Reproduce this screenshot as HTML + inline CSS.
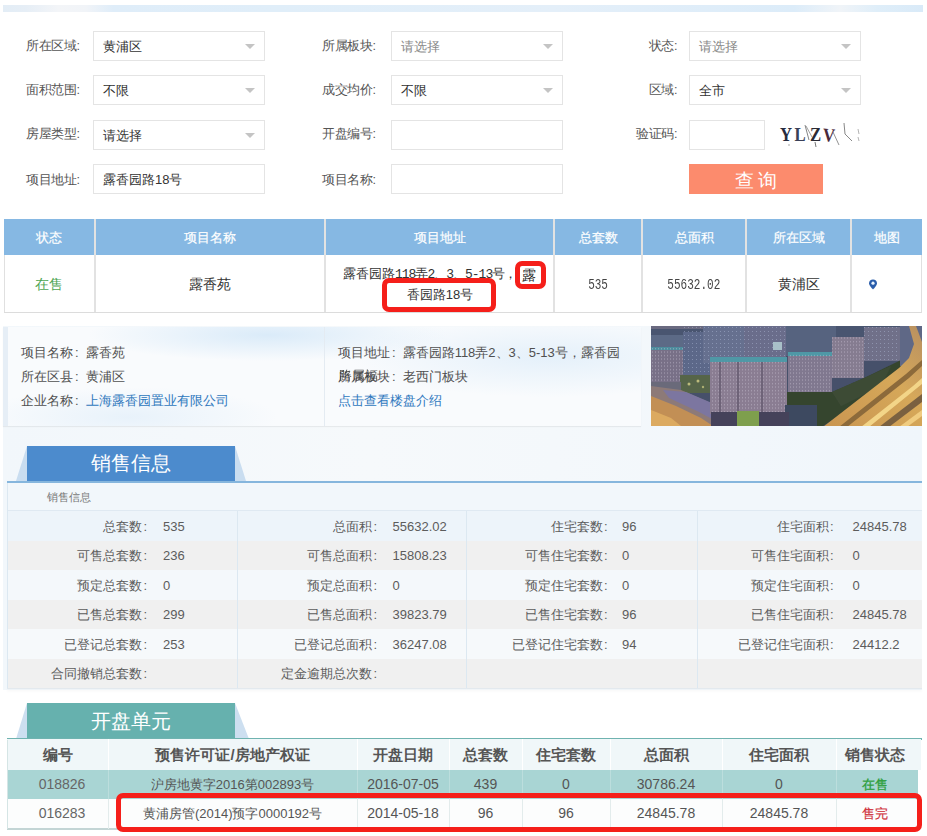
<!DOCTYPE html>
<html><head><meta charset="utf-8">
<style>
*{margin:0;padding:0;box-sizing:border-box}
html,body{width:927px;height:836px;overflow:hidden;background:#fff}
body{text-spacing-trim:space-all;position:relative;font-family:"Liberation Sans",sans-serif;font-size:12px;color:#555}
.a{position:absolute}
.topbar{left:3px;top:5px;width:920px;height:7px;background:linear-gradient(90deg,#e3edf6 0%,#e6eef6 2.5%,#f3f5f8 6%,#f1f4f8 9%,#dfedf9 12%,#e0eef9 30%,#e4eff9 60%,#dcecf9 86%,#f0f4f8 91%,#dfeef9 95%,#d9eaf8 100%)}
.lbl{position:absolute;font-size:12.5px;color:#555;line-height:14px;letter-spacing:-0.4px;white-space:nowrap}
.lbl.r{text-align:right}
.box{position:absolute;border:1px solid #e4e4e4;background:#fff;height:30px}
.box .t{position:absolute;left:9px;top:7px;font-size:13px;line-height:15px;color:#333;white-space:nowrap}
.box .t.ph{color:#888}
.box .arr{position:absolute;right:9px;top:12px;width:0;height:0;border-left:5.5px solid transparent;border-right:5.5px solid transparent;border-top:5px solid #c4c4c4}
.btn{left:689px;top:164px;width:134px;height:30px;background:#fc8b6d;color:#fff;font-size:19px;line-height:33px;text-align:center;letter-spacing:4px;text-indent:3px}

.tbl{position:absolute;left:4px;top:219px;width:918px;height:94px}
.th{position:absolute;top:0;height:36px;background:#86b8e3;color:#fff;font-size:13px;line-height:38px;text-align:center;-webkit-text-stroke:0.2px #fff}
.tdc{position:absolute;top:36px;height:58px;border-bottom:1px solid #dcdcdc;text-align:center;font-size:13.5px;color:#333;line-height:59px}
.ss{display:inline-block;font-family:'Liberation Mono',monospace;font-size:14.5px;transform:scaleX(0.76);color:#444}
.vl{position:absolute;width:2px;background:#e2e2e2}
.rbox{position:absolute;border:5px solid #f51f1a;border-radius:7px;background:#fff}

.bg{left:3px;top:326px;width:919px;height:364px;background:linear-gradient(90deg,#f2f7fb 0%,#f6f9fb 40%,#f0f6fb 100%)}
.panel{left:3px;top:327px;width:638px;height:99px;background:radial-gradient(ellipse 180px 26px at 260px 8px,rgba(205,228,247,0.7),rgba(205,228,247,0) 100%),radial-gradient(ellipse 200px 40px at 540px 30px,rgba(215,233,248,0.6),rgba(215,233,248,0) 100%),radial-gradient(ellipse 150px 30px at 120px 90px,rgba(215,233,248,0.5),rgba(215,233,248,0) 100%),#f9fbfd;border-left:5px solid #e6eef6;box-shadow:0 1px 1px rgba(0,0,0,0.06)}
.pl{position:absolute;font-size:13px;line-height:14px;color:#505050;white-space:nowrap}
.pc{margin:0 7px 0 2px}
.lnk{color:#2f78bd}
.tab{position:absolute;height:35px;color:#fff;font-size:20px;line-height:35px;text-align:center}
.stbl{left:7px;top:481px;width:915px;height:208px;border-left:1px solid #dce7f0}
.srow{position:absolute;left:0;width:915px;height:29.5px}
.sl{position:absolute;text-align:right;font-size:13px;color:#5c5c5c;line-height:16px;white-space:nowrap}
.co{margin-left:1px}
.sv{position:absolute;font-size:13px;color:#5c5c5c;line-height:16px;white-space:nowrap}
.kh{position:absolute;top:739px;height:31px;text-align:center;font-size:15px;font-weight:bold;color:#555;line-height:31px}
.kc{position:absolute;height:29px;text-align:center;font-size:14px;color:#555;line-height:29px;white-space:nowrap}
</style></head><body>
<div class="a topbar"></div>

<!-- form row 1 -->
<div class="lbl" style="left:26px;top:39px">所在区域:</div>
<div class="box" style="left:93px;top:31px;width:172px"><span class="t">黄浦区</span><span class="arr"></span></div>
<div class="lbl" style="left:322px;top:39px">所属板块:</div>
<div class="box" style="left:391px;top:31px;width:172px"><span class="t ph">请选择</span><span class="arr"></span></div>
<div class="lbl r" style="left:600px;width:77px;top:39px">状态:</div>
<div class="box" style="left:689px;top:31px;width:172px"><span class="t ph">请选择</span><span class="arr"></span></div>

<!-- row 2 -->
<div class="lbl" style="left:26px;top:83px">面积范围:</div>
<div class="box" style="left:93px;top:75px;width:172px"><span class="t">不限</span><span class="arr"></span></div>
<div class="lbl" style="left:322px;top:83px">成交均价:</div>
<div class="box" style="left:391px;top:75px;width:172px"><span class="t">不限</span><span class="arr"></span></div>
<div class="lbl r" style="left:600px;width:77px;top:83px">区域:</div>
<div class="box" style="left:689px;top:75px;width:172px"><span class="t">全市</span><span class="arr"></span></div>

<!-- row 3 -->
<div class="lbl" style="left:26px;top:127px">房屋类型:</div>
<div class="box" style="left:93px;top:120px;width:172px"><span class="t">请选择</span><span class="arr"></span></div>
<div class="lbl" style="left:322px;top:127px">开盘编号:</div>
<div class="box" style="left:391px;top:120px;width:172px"></div>
<div class="lbl r" style="left:600px;width:77px;top:127px">验证码:</div>
<div class="box" style="left:689px;top:120px;width:76px"></div>

<!-- row 4 -->
<div class="lbl" style="left:26px;top:173px">项目地址:</div>
<div class="box" style="left:93px;top:164px;width:172px"><span class="t">露香园路18号</span></div>
<div class="lbl" style="left:322px;top:173px">项目名称:</div>
<div class="box" style="left:391px;top:164px;width:172px"></div>

<svg class="a" style="left:770px;top:110px" width="100" height="45" viewBox="0 0 100 45">
  <g font-family="Liberation Serif" font-weight="bold" font-size="19">
    <text transform="translate(10,30.8) scale(0.88,1)" fill="#262b3e">Y</text>
    <text transform="translate(24.5,30.8) scale(0.88,1)" fill="#3a3f58">L</text>
    <text transform="translate(40,31.3) scale(0.88,1)" fill="#2a2a34">Z</text>
    <text transform="translate(52.5,31) scale(0.88,1) rotate(4)" fill="#4a2a3c">V</text>
  </g>
  <path d="M35 15 L39 30" stroke="#666" stroke-width="0.8" fill="none"/>
  <path d="M36 16 L42 27" stroke="#777" stroke-width="0.7" fill="none"/>
  <path d="M45 32 L46 37" stroke="#555" stroke-width="0.8" fill="none"/>
  <path d="M63 22 L69 35" stroke="#777" stroke-width="0.8" fill="none"/>
  <path d="M74 13 L75 24 L82 31" stroke="#888" stroke-width="1" fill="none"/>
  <path d="M88 19 L89 24 M88 27 L89 31" stroke="#aaa" stroke-width="0.9" fill="none"/>
  <circle cx="19" cy="35" r="0.7" fill="#888"/>
</svg>
<div class="a btn">查询</div>


<!-- result table -->
<div class="tbl">
  <div class="th" style="left:0;width:90px">状态</div>
  <div class="th" style="left:92px;width:228px">项目名称</div>
  <div class="th" style="left:322px;width:227px">项目地址</div>
  <div class="th" style="left:551px;width:86px">总套数</div>
  <div class="th" style="left:639px;width:102px">总面积</div>
  <div class="th" style="left:743px;width:103px">所在区域</div>
  <div class="th" style="left:848px;width:70px">地图</div>
  <div class="tdc" style="left:0;width:918px;border-left:1px solid #e0e0e0;border-right:1px solid #e0e0e0"></div>
  <div class="tdc" style="left:0;width:90px;color:#4fa553">在售</div>
  <div class="tdc" style="left:92px;width:228px">露香苑</div>
  <div class="tdc" style="left:551px;width:86px"><span class="ss">535</span></div>
  <div class="tdc" style="left:639px;width:102px"><span class="ss">55632.02</span></div>
  <div class="tdc" style="left:743px;width:103px;font-size:14px">黄浦区</div>
  <div class="vl" style="left:90px;top:0;height:93px"></div>
  <div class="vl" style="left:320px;top:0;height:93px"></div>
  <div class="vl" style="left:549px;top:0;height:93px"></div>
  <div class="vl" style="left:637px;top:0;height:93px"></div>
  <div class="vl" style="left:741px;top:0;height:93px"></div>
  <div class="vl" style="left:846px;top:0;height:93px"></div>
</div>
<div class="a" style="left:343px;top:266px;font-size:13px;line-height:16px;color:#333;white-space:nowrap">露香园路<span style="font-family:'Liberation Mono',monospace;font-size:13px;letter-spacing:-1px">118弄2、3、5-13号，</span></div>
<div class="rbox" style="left:515px;top:261px;width:31px;height:28px;font-size:14px;color:#222;line-height:18px;text-align:left;padding-left:2px">露</div>
<div class="rbox" style="left:382px;top:278px;width:114px;height:34px;font-size:13px;color:#333;line-height:23px;text-align:center;padding-left:2px">香园路18号</div>
<svg class="a" style="left:868px;top:279px" width="10" height="11" viewBox="0 0 10 11"><path d="M5 0.5C2.6 0.5 1 2.2 1 4.3C1 6.8 5 10.5 5 10.5C5 10.5 9 6.8 9 4.3C9 2.2 7.4 0.5 5 0.5Z" fill="#2a5dab"/><circle cx="5" cy="4.2" r="1.6" fill="#e8f4ff"/></svg>

<div class="a bg"></div>
<div class="a panel">
  <div class="pl" style="left:13px;top:19px">项目名称<span class="pc">:</span>露香苑</div>
  <div class="pl" style="left:13px;top:43px">所在区县<span class="pc">:</span>黄浦区</div>
  <div class="pl" style="left:13px;top:67px">企业名称<span class="pc">:</span><span class="lnk">上海露香园置业有限公司</span></div>
  <div class="a" style="left:316px;top:0;width:1px;height:99px;background:#e4ebf2"></div>
  <div class="pl" style="left:330px;top:19px">项目地址<span class="pc">:</span>露香园路118弄2、3、5-13号，露香园</div>
  <div class="pl" style="left:330px;top:43px"><span style="position:relative">所属板<span style="position:absolute;left:0.6px;top:0.3px;color:#333;opacity:0.8">路属福</span></span>块<span class="pc">:</span>老西门板块</div>
  <div class="pl" style="left:330px;top:67px"><span class="lnk">点击查看楼盘介绍</span></div>
</div>
<svg class="a" style="left:651px;top:326px" width="271" height="100" viewBox="0 0 271 100">
  <defs>
    <filter id="bl" x="-5%" y="-5%" width="110%" height="110%"><feGaussianBlur stdDeviation="0.7"/></filter>
    <linearGradient id="road" x1="0" y1="1" x2="1" y2="0"><stop offset="0" stop-color="#c99550"/><stop offset="0.6" stop-color="#d6a85a"/><stop offset="1" stop-color="#b89060"/></linearGradient>
    <linearGradient id="roadL" x1="0" y1="0" x2="1" y2="1"><stop offset="0" stop-color="#b88450"/><stop offset="1" stop-color="#d7a258"/></linearGradient>
    <pattern id="win" width="3" height="3.5" patternUnits="userSpaceOnUse"><rect x="1" y="1" width="1" height="1.2" fill="#d8d0e0" opacity="0.45"/></pattern>
    <pattern id="win2" width="4" height="4" patternUnits="userSpaceOnUse"><rect x="1" y="1" width="1" height="1" fill="#c8d4f0" opacity="0.35"/></pattern>
  </defs>
  <rect width="271" height="100" fill="#46506a"/>
  <g filter="url(#bl)">
  <rect x="0" y="0" width="271" height="14" fill="#4a5570"/>
  <rect x="0" y="0" width="60" height="3" fill="#6a6a80"/>
  <rect x="0" y="9" width="55" height="14" fill="#5b6a86"/>
  <rect x="32" y="6" width="28" height="46" fill="#5c6889"/>
  <rect x="52" y="0" width="41" height="37" fill="#66708f"/>
  <rect x="93" y="0" width="42" height="38" fill="#6a6d8b"/>
  <rect x="32" y="0" width="103" height="50" fill="url(#win2)"/>
  <rect x="122" y="16" width="9" height="8" fill="#a8c0c8"/>
  <rect x="135" y="0" width="50" height="30" fill="#57637f"/>
  <rect x="0" y="22" width="32" height="35" fill="#787087"/>
  <rect x="0" y="21" width="32" height="3" fill="#4e8d9d"/>
  <rect x="0" y="22" width="32" height="35" fill="url(#win)"/>
  <rect x="29" y="49" width="31" height="18" fill="#56654a"/>
  <circle cx="38" cy="58" r="1.5" fill="#e8e090" opacity="0.7"/><circle cx="47" cy="55" r="1.5" fill="#e8e090" opacity="0.7"/><circle cx="52" cy="61" r="1.2" fill="#e8e090" opacity="0.6"/>
  <rect x="0" y="56" width="30" height="8" fill="#6a6a7a"/>
  <polygon points="0,60 30,64 62,78 75,92 90,100 0,100" fill="#8d7a78"/>
  <polygon points="12,64 35,66 68,80 82,97 74,100 48,86 18,72" fill="#7c76a0"/>
  <polygon points="0,70 25,80 50,92 62,100 0,100" fill="#c28f55"/><polygon points="0,84 20,92 30,100 0,100" fill="#dcaa60"/>
  <rect x="59" y="34" width="77" height="54" fill="#8a7d92"/>
  <rect x="59" y="31" width="77" height="5" fill="#4f98a6"/>
  <rect x="68" y="36" width="2" height="50" fill="#6e6378"/>
  <rect x="86" y="36" width="2" height="50" fill="#6e6378"/>
  <rect x="110" y="36" width="2" height="50" fill="#6e6378"/>
  <rect x="59" y="34" width="77" height="54" fill="url(#win)"/>
  <rect x="137" y="28" width="44" height="38" fill="#80788f"/>
  <rect x="137" y="26" width="44" height="4" fill="#4f98a6"/>
  <rect x="137" y="28" width="44" height="38" fill="url(#win)"/>
  <rect x="181" y="11" width="32" height="41" fill="#857b90"/>
  <rect x="181" y="11" width="32" height="41" fill="url(#win)"/>
  <rect x="213" y="1" width="36" height="34" fill="#6f7089"/>
  <rect x="213" y="1" width="36" height="34" fill="url(#win2)"/>
  <polygon points="136,66 181,66 213,52 250,34 262,36 250,50 172,100 136,100" fill="#36442f"/>
  <polygon points="181,66 213,52 240,40 230,60 190,80" fill="#3d4c36"/>
  <rect x="134" y="79" width="32" height="21" fill="#3e4860"/>
  <rect x="60" y="86" width="78" height="14" fill="#45425a"/>
  <rect x="86" y="85" width="22" height="15" fill="#7e9f4e"/>
  <rect x="249" y="0" width="22" height="40" fill="#5f6886"/><polygon points="172,101 248,42 258,32 263,18 258,0 265,0 271,16 271,101" fill="url(#road)"/>
  <polygon points="188,101 255,48 271,34 271,40 258,52 196,101" fill="#8c6a3a"/>
  <polygon points="210,101 262,60 271,52 271,58 218,101" fill="#f3d588"/>
  <polygon points="228,101 271,68 271,76 238,101" fill="#7a6040"/>
  <polygon points="248,101 271,84 271,90 256,101" fill="#f0cc80"/>

  </g>
</svg>

<!-- sales tab -->
<svg class="a" style="left:0;top:440px" width="927" height="50">
  <polygon points="16,41 27,6 27,41" fill="#c9ddf0"/>
  <polygon points="235,6 246,41 235,41" fill="#c9ddf0"/>
  <rect x="7" y="41" width="915" height="2" fill="#86b6dd"/>
</svg>
<div class="a tab" style="left:27px;top:446px;width:208px;background:#4c8bcd">销售信息</div>
<div class="a" style="left:7px;top:483px;width:915px;height:28px;background:#f2f7fb;border-bottom:1px solid #dfe9f2"></div>
<div class="a" style="left:47px;top:491px;font-size:11px;color:#777;line-height:13px">销售信息</div>
<div class="a" style="left:7px;top:511.0px;width:915px;height:29.5px;background:#edf4fa"></div>
<div class="sl" style="left:7px;width:140px;top:518.5px">总套数<span class="co">:</span></div><div class="sv" style="left:163px;top:518.5px">535</div><div class="sl" style="left:237px;width:140px;top:518.5px">总面积<span class="co">:</span></div><div class="sv" style="left:392.5px;top:518.5px">55632.02</div><div class="sl" style="left:466px;width:141.5px;top:518.5px">住宅套数<span class="co">:</span></div><div class="sv" style="left:622px;top:518.5px">96</div><div class="sl" style="left:697px;width:136.5px;top:518.5px">住宅面积<span class="co">:</span></div><div class="sv" style="left:852.5px;top:518.5px">24845.78</div>
<div class="a" style="left:7px;top:540.5px;width:915px;height:29.5px;background:#f0f0f0"></div>
<div class="sl" style="left:7px;width:140px;top:548.0px">可售总套数<span class="co">:</span></div><div class="sv" style="left:163px;top:548.0px">236</div><div class="sl" style="left:237px;width:140px;top:548.0px">可售总面积<span class="co">:</span></div><div class="sv" style="left:392.5px;top:548.0px">15808.23</div><div class="sl" style="left:466px;width:141.5px;top:548.0px">可售住宅套数<span class="co">:</span></div><div class="sv" style="left:622px;top:548.0px">0</div><div class="sl" style="left:697px;width:136.5px;top:548.0px">可售住宅面积<span class="co">:</span></div><div class="sv" style="left:852.5px;top:548.0px">0</div>
<div class="a" style="left:7px;top:570.0px;width:915px;height:29.5px;background:#f4f8fb"></div>
<div class="sl" style="left:7px;width:140px;top:577.5px">预定总套数<span class="co">:</span></div><div class="sv" style="left:163px;top:577.5px">0</div><div class="sl" style="left:237px;width:140px;top:577.5px">预定总面积<span class="co">:</span></div><div class="sv" style="left:392.5px;top:577.5px">0</div><div class="sl" style="left:466px;width:141.5px;top:577.5px">预定住宅套数<span class="co">:</span></div><div class="sv" style="left:622px;top:577.5px">0</div><div class="sl" style="left:697px;width:136.5px;top:577.5px">预定住宅面积<span class="co">:</span></div><div class="sv" style="left:852.5px;top:577.5px">0</div>
<div class="a" style="left:7px;top:599.5px;width:915px;height:29.5px;background:#f0f0f0"></div>
<div class="sl" style="left:7px;width:140px;top:607.0px">已售总套数<span class="co">:</span></div><div class="sv" style="left:163px;top:607.0px">299</div><div class="sl" style="left:237px;width:140px;top:607.0px">已售总面积<span class="co">:</span></div><div class="sv" style="left:392.5px;top:607.0px">39823.79</div><div class="sl" style="left:466px;width:141.5px;top:607.0px">已售住宅套数<span class="co">:</span></div><div class="sv" style="left:622px;top:607.0px">96</div><div class="sl" style="left:697px;width:136.5px;top:607.0px">已售住宅面积<span class="co">:</span></div><div class="sv" style="left:852.5px;top:607.0px">24845.78</div>
<div class="a" style="left:7px;top:629.0px;width:915px;height:29.5px;background:#f6f9fb"></div>
<div class="sl" style="left:7px;width:140px;top:636.5px">已登记总套数<span class="co">:</span></div><div class="sv" style="left:163px;top:636.5px">253</div><div class="sl" style="left:237px;width:140px;top:636.5px">已登记总面积<span class="co">:</span></div><div class="sv" style="left:392.5px;top:636.5px">36247.08</div><div class="sl" style="left:466px;width:141.5px;top:636.5px">已登记住宅套数<span class="co">:</span></div><div class="sv" style="left:622px;top:636.5px">94</div><div class="sl" style="left:697px;width:136.5px;top:636.5px">已登记住宅面积<span class="co">:</span></div><div class="sv" style="left:852.5px;top:636.5px">24412.2</div>
<div class="a" style="left:7px;top:658.5px;width:915px;height:29.5px;background:#f0f0f0"></div>
<div class="sl" style="left:7px;width:140px;top:666.0px">合同撤销总套数<span class="co">:</span></div><div class="sl" style="left:237px;width:140px;top:666.0px">定金逾期总次数<span class="co">:</span></div>

<div class="a" style="left:237px;top:511px;width:1px;height:177px;background:#dce8f1"></div>
<div class="a" style="left:466px;top:511px;width:1px;height:177px;background:#dce8f1"></div>
<div class="a" style="left:697px;top:511px;width:1px;height:177px;background:#dce8f1"></div>
<div class="a" style="left:7px;top:483px;width:1px;height:206px;background:#dce8f1"></div>
<div class="a" style="left:7px;top:688px;width:915px;height:1px;background:#e3e9ee;box-shadow:0 2px 3px rgba(0,0,0,0.07)"></div>

<!-- 开盘单元 -->
<svg class="a" style="left:0;top:700px" width="927" height="45">
  <polygon points="16,39 27,3 27,39" fill="#cddff0"/>
  <polygon points="235,3 249,39 235,39" fill="#cddff0"/>
  <rect x="7" y="38" width="915" height="2" fill="#6fb3b0"/>
</svg>
<div class="a tab" style="left:27px;top:703px;width:208px;height:35px;line-height:37px;background:#66b1ae">开盘单元</div>
<div class="a" style="left:7px;top:739px;width:914px;height:31px;background:#f0f7f9"></div>
<div class="a" style="left:7px;top:770px;width:911px;height:29px;background:#a9d5d4"></div>
<div class="a" style="left:7px;top:799px;width:911px;height:31px;background:#fcfdfd;border-bottom:2px solid #c3d5d5"></div><div class="a" style="left:7px;top:740px;width:1px;height:89px;background:#d5e5e5"></div>
<div class="a" style="left:108px;top:739px;width:1px;height:31px;background:#fff"></div><div class="a" style="left:108px;top:770px;width:1px;height:29px;background:#bcdedd"></div><div class="a" style="left:108px;top:799px;width:1px;height:30px;background:#e3ecec"></div><div class="a" style="left:357px;top:739px;width:1px;height:31px;background:#fff"></div><div class="a" style="left:357px;top:770px;width:1px;height:29px;background:#bcdedd"></div><div class="a" style="left:357px;top:799px;width:1px;height:30px;background:#e3ecec"></div><div class="a" style="left:449px;top:739px;width:1px;height:31px;background:#fff"></div><div class="a" style="left:449px;top:770px;width:1px;height:29px;background:#bcdedd"></div><div class="a" style="left:449px;top:799px;width:1px;height:30px;background:#e3ecec"></div><div class="a" style="left:522px;top:739px;width:1px;height:31px;background:#fff"></div><div class="a" style="left:522px;top:770px;width:1px;height:29px;background:#bcdedd"></div><div class="a" style="left:522px;top:799px;width:1px;height:30px;background:#e3ecec"></div><div class="a" style="left:610px;top:739px;width:1px;height:31px;background:#fff"></div><div class="a" style="left:610px;top:770px;width:1px;height:29px;background:#bcdedd"></div><div class="a" style="left:610px;top:799px;width:1px;height:30px;background:#e3ecec"></div><div class="a" style="left:722px;top:739px;width:1px;height:31px;background:#fff"></div><div class="a" style="left:722px;top:770px;width:1px;height:29px;background:#bcdedd"></div><div class="a" style="left:722px;top:799px;width:1px;height:30px;background:#e3ecec"></div><div class="a" style="left:836px;top:739px;width:1px;height:31px;background:#fff"></div><div class="a" style="left:836px;top:770px;width:1px;height:29px;background:#bcdedd"></div><div class="a" style="left:836px;top:799px;width:1px;height:30px;background:#e3ecec"></div>
<div class="kh" style="left:7px;width:101px">编号</div>
<div class="kh" style="left:108px;width:249px">预售许可证/房地产权证</div>
<div class="kh" style="left:357px;width:92px">开盘日期</div>
<div class="kh" style="left:449px;width:73px">总套数</div>
<div class="kh" style="left:522px;width:88px">住宅套数</div>
<div class="kh" style="left:610px;width:112px">总面积</div>
<div class="kh" style="left:722px;width:114px">住宅面积</div>
<div class="kh" style="left:836px;width:78px">销售状态</div>
<div class="kc" style="left:16px;top:770px;width:92px;color:#666">018826</div>
<div class="kc" style="left:108px;top:770px;width:249px;font-size:13px">沪房地黄字2016第002893号</div>
<div class="kc" style="left:357px;top:770px;width:92px">2016-07-05</div>
<div class="kc" style="left:449px;top:770px;width:73px">439</div>
<div class="kc" style="left:522px;top:770px;width:88px">0</div>
<div class="kc" style="left:610px;top:770px;width:112px">30786.24</div>
<div class="kc" style="left:722px;top:770px;width:114px">0</div>
<div class="kc" style="left:836px;top:770px;width:78px;color:#2c9e3a;font-size:13px;-webkit-text-stroke:0.3px #2c9e3a">在售</div>
<div class="kc" style="left:16px;top:799px;width:92px;color:#666">016283</div>
<div class="kc" style="left:357px;top:799px;width:92px">2014-05-18</div>
<div class="kc" style="left:449px;top:799px;width:73px">96</div>
<div class="kc" style="left:522px;top:799px;width:88px">96</div>
<div class="rbox" style="left:116px;top:793px;width:806px;height:39px;background:transparent"></div>
<div class="kc" style="left:108px;top:799px;width:249px;font-size:13px">黄浦房管(2014)预字0000192号</div>
<div class="kc" style="left:610px;top:799px;width:112px">24845.78</div>
<div class="kc" style="left:722px;top:799px;width:114px">24845.78</div>
<div class="kc" style="left:836px;top:799px;width:78px;color:#d0303a;font-size:13px;-webkit-text-stroke:0.2px #d0303a">售完</div>
</body></html>
